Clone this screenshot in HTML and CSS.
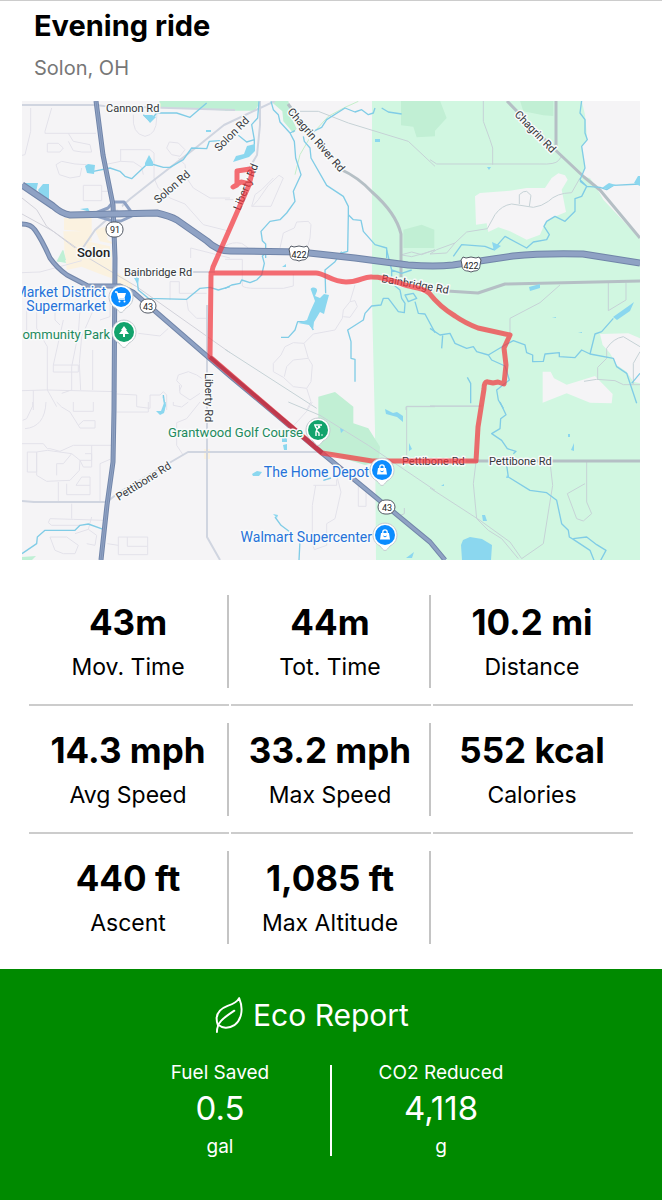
FILE: index.html
```html
<!DOCTYPE html>
<html lang="en">
<head>
<meta charset="utf-8">
<meta name="viewport" content="width=device-width, initial-scale=1">
<title>Evening ride</title>
<link rel="stylesheet" href="styles.css">
</head>
<body>
<main class="ride">
  <header class="ride-header">
    <h1 class="ride-title">Evening ride</h1>
    <p class="ride-place">Solon, OH</p>
  </header>

  <svg class="map" viewBox="22 101 618 459" role="img" aria-label="Route map around Solon, OH">
    <defs>
      <path id="pin" d="M0 15.500C-2 15.500-3 13-5 11A12 12 0 1 1 5 11C3 13 2 15.500 0 15.500z"/>
      <g id="bag"><path d="M-4-2h8l1 6.500h-10z" fill="#fff"/><path d="M-2.200-1.500v-1.500a2.200 2.200 0 0 1 4.400 0v1.500" fill="none" stroke="#fff" stroke-width="1.300"/><path d="M-1.600 1q1.600 1.800 3.200 0" fill="none" stroke="#0b8cff"/></g>
    </defs>
    <rect class="land" x="22" y="101" width="618" height="459"/>
    <path class="park" d="M372 101H640V560H376L375 430L372 300z"/>

    <g transform="translate(430 98) scale(.33333)">
      <path class="land" d="M455 8L465 50L472 125L455 145L465 210L450 235L480 240L500 270L520 305L630 422V8z"/>
      <path class="land" d="M135 295L150 285L240 278L290 270L345 270L365 240L385 226L405 232L413 245L395 275L408 342L370 358L345 375L330 410L290 425L240 400L205 388L175 402L170 376L138 380z"/>
      <path class="wood" d="M270 8H370V54L340 52L280 40zM0 8H30L50 60L0 115z"/>
    </g>
    <g transform="translate(430 250) scale(.33333)">
      <path class="land" d="M510 252L595 250L630 265V400L610 395L590 365L560 345L540 310L518 285z"/>
      <path class="land" d="M338 365H362L372 385L410 404L495 378L548 432L545 460L480 458L410 430L338 458z"/>
    </g>
    <g transform="translate(225 98) scale(.33333)">
      <path class="wood" d="M528 8H630V115L575 118L565 86L528 82zM535 395L590 380L628 395V450H535z"/>
      <path class="wood-soft" d="M0 8H108L90 38L0 38zM135 8H190L200 60L215 92L205 105L175 70L172 40z"/>
    </g>
    <g transform="translate(20 98) scale(.33333)">
      <path class="wood-soft" d="M418 8H630V38L418 28z"/>
      <path class="town" d="M132 360H185V400L132 395zM185 360H215V430H185zM225 395L262 385V425L290 440L240 430zM130 400H205V440L135 480zM200 430L270 445V480H200z"/>
      <path class="wood-soft" d="M128 455L138 495L110 490z"/>
    </g>
    <g transform="translate(20 250) scale(.33333)">
      <path class="town" d="M135 0H275V85L240 72L185 50L140 60zM275 55L335 100L340 125L275 100z"/>
      <path class="wood-soft" d="M130 0L138 30L112 36z"/>
    </g>
    <g transform="translate(225 250) scale(.33333)"><path class="wood" d="M280 440L330 426L385 470V520L430 535L465 590L462 635L420 645L290 605L270 560L280 500z"/></g>
    <path class="wood-soft" d="M22 557L36 556L32 560H22z"/>
    <path class="town" d="M204 449h6v10h-6z"/>

    <g class="minor" transform="translate(20 98) scale(.33333)">
      <path d="M32 30V100L15 170L6 172M95 30L75 100V106H228M145 106L160 130L210 140L215 162H185L160 158L145 130M82 136H115L130 150L120 162H82zM108 200L125 190L165 198L200 200M108 200L118 230L150 240L180 235L185 210M190 262H245V308H190zM245 280H268M340 50Q335 108 375 115Q410 110 410 60L412 35M300 155H390L402 165V240L415 270L450 300L495 318L550 380L630 400M440 150L448 132L475 135L495 155L480 175L455 170zM475 180L495 200L500 240L520 270L570 300H630M512 480V450L630 480M302 155V190L255 200M302 190L340 192L365 208L370 230"/>
      <path class="rail" d="M6 300L50 335L80 385L110 408L165 450M6 348L100 400L170 450"/>
    </g>
    <g class="minor" transform="translate(225 98) scale(.33333)">
      <path d="M80 325H138L175 240L162 232L130 262L100 305L82 325M80 325L90 290L110 275L145 240M0 305L25 305M165 450L175 405L208 390L215 372L250 370L258 380L255 420L248 445M0 445Q20 430 50 436L70 450"/>
      <path class="trail" d="M210 230L225 170L260 110L310 55L360 28L400 10"/>
      <path class="road-thin" d="M225 40H280L370 75L550 130L630 205M530 470L560 462L590 470L630 455"/>
    </g>
    <g class="road-thin" transform="translate(430 98) scale(.33333)">
      <path d="M160 8V70L180 125L188 150V200M0 185L20 198H330Q375 200 385 188L395 175M268 318L268 290Q280 278 290 280L303 292L298 325M0 468L50 465L75 435L110 402L172 392L195 350Q215 322 245 318L310 328Q335 325 355 310Q380 285 425 284L450 240M0 468L20 455L75 435"/>
    </g>
    <g class="minor" transform="translate(20 250) scale(.33333)">
      <path d="M6 68L60 66L185 32M50 165V235L82 290V420L110 470M105 160V210L120 225M150 160Q185 150 180 180L175 250L155 350V420L125 430M220 180L185 260L178 340L182 420M218 300V420M100 345H175V366H100zM6 422L80 420L290 425M40 420V480M130 210L100 345M20 170V260M290 432L350 435V470L390 475V435H420L430 425L440 435V480M450 150V95H478V130H560M500 150L505 180L530 205H565M355 250L420 258L445 235M478 422L485 408L470 392L475 375L505 365L530 375L545 385M540 430L510 450L480 430L478 405M240 210L270 200V160"/>
      <path class="rail" d="M190 15L350 110L630 308"/>
    </g>
    <g class="minor" transform="translate(225 250) scale(.33333)">
      <path d="M0 28H52V108Q60 115 90 115H175L205 108V72M390 105L375 155L355 180L352 205L330 240L265 252L237 280L205 278L180 290L168 315L145 340V365L175 382L205 410L245 415M237 280L250 325L262 345L258 395L245 415L258 455L245 480M250 325L205 330L185 350L178 380M375 155L390 152L397 170L375 202L355 200"/>
      <path class="road-thin" d="M0 298L275 475M530 15L560 20L590 12L630 0M543 480V470H630"/>
    </g>
    <g class="road-thin" transform="translate(430 250) scale(.33333)">
      <path d="M240 250V205L330 158L390 105M535 98V182L588 150V98M0 468H155M462 394L500 388L555 392L580 404H630M503 390V352L530 325V295Q550 265 580 260L630 290M630 305L610 340V402"/>
    </g>
    <g class="minor" transform="translate(20 402) scale(.33333)">
      <path d="M15 80Q75 75 78 0M38 0V12L20 50L8 55M110 0L125 15L150 30L180 78H225V56H190L175 70M160 0V28H220V0M290 30H385V0M460 0V10L485 15L505 0M540 0L500 50L470 62V130L490 160M6 125H70L82 140H90L120 148L160 130H275M50 150L82 145L155 155L180 175L178 205L150 235L80 238L50 220zM22 150H50V210H22zM155 155L130 185H110V220M180 175H215V130M180 175L190 195H215V155H195M115 240V298M140 245V278H210V225H185L168 250H210M240 300V185L270 172M155 305V350M90 350L160 352L250 355M90 350L85 362L95 370L185 370M90 405H140L175 430L165 455H130L105 445zM165 395L205 382L230 400L225 430L200 425M295 405H383V458H295zM322 405V433H383M262 425L295 430M205 382L215 345"/>
    </g>
    <g class="minor" transform="translate(225 402) scale(.33333)">
      <path d="M262 0L245 28L205 72M265 250H335V232M335 220L348 270L330 350L305 365V430L268 443L262 425V310L272 250M400 245V313H423V265"/>
      <path class="road-thin" d="M190 0L285 40L430 130L630 265M630 13H545V160M538 318V335L520 343"/>
    </g>
    <g class="road-thin" transform="translate(430 402) scale(.33333)">
      <path d="M0 13H148M138 180L130 245L140 350L175 385L215 410L265 470M0 258L150 355L240 420L275 470L340 425L355 330L368 250L360 180M470 178V300L485 335L460 357L440 350L412 275L465 245"/>
    </g>

    <path class="road" d="M22 105H96L104 106L235 110M275 101L224 125L198 146L154 180L130 199L95 230L80 252M260 101V125L257 155L247 172M190 272H215M22 501L34 502H107L118 493L188 452H322M207 305V537L220 560"/>
    <path class="road-gray" d="M340 169Q358 177 372 192Q396 213 401 234V277M507 101L550 145L584 177L600 190L640 238M556 101V148M447 291L478 293L505 284L640 281M430 461H640M288 104L300 120"/>

    <g class="river">
      <g transform="translate(20 98) scale(.33333)"><path d="M370 50L390 70L410 45H470L510 58L560 15M220 220L270 210L300 220L315 235L335 242L385 195L430 208H450L490 185L515 150L560 152L568 130L600 128"/></g>
      <g transform="translate(225 98) scale(.33333)"><path d="M102 10L98 60L80 80L88 125L65 132L40 112M88 125V150M138 10L145 35L160 50L165 72L195 105L208 130L212 180L228 230L205 280L210 310L185 345L165 365L135 370L108 400L112 428L122 438V480M195 105L210 98M235 115L238 130L255 150L258 180L305 262L355 295L370 325V350L368 460L350 465M370 350L385 365L408 367L415 400L450 440L485 450V480M265 100L290 88L305 65L360 30L390 42L410 35L430 50L445 45L450 30M470 30L490 42L530 48"/></g>
      <g transform="translate(430 98) scale(.33333)"><path d="M455 8L450 45L465 65V105L472 125L455 145L465 210L450 245L470 265L455 295L435 302V340L405 370L375 355L350 370L342 385L358 410L350 425L310 432L290 450L225 415L190 455L165 445L95 440L70 475M450 250L470 265L510 268L530 275L550 262L630 258"/></g>
      <g transform="translate(20 250) scale(.33333)"><path d="M350 80L355 120L385 145L500 148L540 115L570 112L595 120L630 110M430 435L435 470"/></g>
      <g transform="translate(225 250) scale(.33333)"><path d="M0 115L20 105L45 100L50 90L75 98L95 90L110 75L118 40L112 18L125 8M350 5L330 35L300 60L302 130M168 262H190L210 240L218 215L250 215L265 240M390 395V328L378 325V275L368 240L415 210L420 190L440 168L468 165L475 145L490 145L520 185L538 188L540 160L530 145L525 120L500 100V60L485 0M500 60L530 70L560 60M540 135L565 130L575 145L550 155zM570 155L580 190L600 192L630 248"/></g>
      <g transform="translate(430 250) scale(.33333)"><path d="M0 235L30 255L60 250L75 280L110 295L130 290L140 305L175 315L225 285L250 272L285 285L290 308L308 315V335L340 334L345 312L388 308V320L435 323L455 300L480 312L550 325L560 350L590 370L600 400M480 312L495 252L515 245L550 205M38 257L35 295M175 315L185 330L225 348L238 390L200 420L205 450L220 475M112 382L122 400V460M605 400L630 370M600 400L620 460"/></g>
      <g transform="translate(20 402) scale(.33333)"><path d="M435 0L430 30M6 455L50 425L52 405L75 385H165L180 370L205 366L250 382"/></g>
      <g transform="translate(225 402) scale(.33333)"><path d="M150 345L168 370L195 390M222 475L225 415M295 235L318 228"/></g>
      <g transform="translate(430 402) scale(.33333)"><path d="M210 0L228 38L212 50L210 80L185 95L215 115L232 140L258 148L250 155M230 190L235 225L300 265L350 272L380 295L395 365L415 385L418 405L430 412L480 445L492 475M430 410L470 405L500 428L528 445L512 475"/></g>
    </g>
    <g class="lake">
      <path d="M85 166L88 164L95 165L94 174L87 173zM25 183H38L36 192zM38 190L43 184H49V200L42 199zM145 163L149 155L153 162V166H145zM80 209L88 208L90 212zM144 115L150 123L156 117L152 115zM134 133L138 137zM206 130h5v2h-5z"/>
      <path d="M233 162L236 156L244 154L247 146L255 144V151L249 157zM375 139h5v3h-5zM487 167h4l-2 3z"/>
      <path d="M311 290C309 287 318 286 317 291L315 296L320 298L324 294L329 295L326 306L324 314L320 312L314 322L313 330L309 325L298 323L307 320L310 312L315 301zM282 267l4-3v3zM134 278h5l-1 7zM162 395L166 405L164 413L160 415L156 411L161 411L164 403z"/>
      <path d="M529 287L540 284V288L530 291zM613 317L630 305L634 302L630 311L617 320zM552 317h4v1zM578 332h4v1zM602 188L606 185L609 183L616 185L607 189zM634 183L638 176H640V186zM492 242L501 246L494 251z"/>
      <path d="M252 474L257 471L262 472L259 476L253 476zM282 438l5-4v8h-5zM283 445l4-1v6h-3zM340 428l4 2l-3 3zM385 409L393 413L397 412L403 416V422L397 417L386 414zM409 443l3 6l-3 2zM406 558L414 552L412 558zM273 514l5 1l-1 3zM461 545L463 540L470 537L482 539L492 545L491 560H462zM482 515h3l2 6h-4zM571 450l3-7v8zM568 434h2v3h-2zM507 475l3 3h-4zM441 486l3-2v2z"/>
    </g>

    <g class="ramp"><path d="M93 214L108 208L113 202H124L132 213M93 215L113 221H121L132 216"/></g>
    <circle class="land" cx="119" cy="207" r="3"/>
    <path class="hwy-edge" d="M96 101L103 155L113 205L115 258L114 410L113 462L107 505L101 560"/>
    <path class="hwy" d="M96 101L103 155L113 205L115 258L114 410L113 462L107 505L101 560"/>
    <path class="hwy-core" d="M96 101L103 155L113 205L115 258L114 410L113 462L107 505L101 560"/>
    <path class="hwy-edge" d="M22 224Q31 224 35 230Q42 240 50 258Q57 268 67 275L88 286H120L133 292L230 376L322 453L430 542L445 560"/>
    <path class="hwy" d="M22 224Q31 224 35 230Q42 240 50 258Q57 268 67 275L88 286H120L133 292L230 376L322 453L430 542L445 560"/>
    <path class="hwy-edge major" d="M22 185L53 206Q62 214 70 215L157 213Q170 216 177 220L207 241Q217 251 230 251L300 252L355 258L408 265Q435 267 453 265L513 256Q543 253 583 254L640 263"/>
    <path class="hwy major-core" d="M22 185L53 206Q62 214 70 215L157 213Q170 216 177 220L207 241Q217 251 230 251L300 252L355 258L408 265Q435 267 453 265L513 256Q543 253 583 254L640 263"/>

    <g class="label">
      <text x="106" y="112">Cannon Rd</text>
      <text transform="translate(158 204) rotate(-41)">Solon Rd</text>
      <text transform="translate(219 152) rotate(-45)">Solon Rd</text>
      <text transform="translate(287 112) rotate(49)">Chagrin River Rd</text>
      <text transform="translate(514 115) rotate(46)">Chagrin Rd</text>
      <text transform="translate(240 211) rotate(-68)">Liberty Rd</text>
      <text x="124" y="276">Bainbridge Rd</text>
      <text transform="translate(381 282) rotate(10)">Bainbridge Rd</text>
      <text transform="translate(205 373) rotate(90)">Liberty Rd</text>
      <text transform="translate(119 501) rotate(-32)">Pettibone Rd</text>
      <text x="402" y="465">Pettibone Rd</text>
      <text x="489" y="465">Pettibone Rd</text>
    </g>

    <path class="route" d="M213 267L249 185L252 173L250 169L237 171V185L233 187L241 182L250 184M213 267L211 275L210 357L322 453L372 461H476L478 427L484 389Q484 381 488 382L493 383L498 382L504 384L506 365L504 348L510 335L478 328Q465 323 455 316Q440 307 429 293Q424 289 413 287C400 285 390 277 372 277C364 276 360 282 346 282S324 273 316 273H211"/>
    <path class="route-overlap" d="M210 357L322 453"/>

    <text class="city" x="77" y="257">Solon</text>
    <g class="poi blue" text-anchor="end">
      <text x="106" y="297">Market District</text>
      <text x="106" y="311">Supermarket</text>
      <text x="369" y="477">The Home Depot</text>
      <text x="372" y="542">Walmart Supercenter</text>
    </g>
    <g class="poi green" text-anchor="end">
      <text x="110" y="339">ommunity Park</text>
      <text x="303" y="437">Grantwood Golf Course</text>
    </g>

    <g class="shield">
      <rect x="106" y="222" width="17" height="15" rx="7"/><text x="115" y="233">91</text>
      <rect x="140" y="299" width="16" height="14" rx="7"/><text x="148" y="310">43</text>
      <rect x="378" y="500" width="17" height="14" rx="7"/><text x="387" y="511">43</text>
      <path d="M291 246l3 1 5-1 5 1 3-1 2 3-1 5c0 5-3 6-6 6l-3 1-3-1c-4 0-6-2-6-6l-1-5z"/><text x="299" y="258">422</text>
      <path d="M463 257l3 1 5-1 5 1 3-1 2 3-1 5c0 5-3 6-6 6l-3 1-3-1c-4 0-6-2-6-6l-1-5z"/><text x="471" y="269">422</text>
    </g>

    <g transform="translate(121 297)"><use href="#pin" class="pin"/><circle class="pin-blue" r="10"/><path d="M-6-5H-4L-2 2H4" fill="none" stroke="#fff" stroke-width="1.300"/><path d="M-4-4H5L3.500 1H-2.500z" fill="#fff"/><circle cx="-1.500" cy="4.500" r="1" fill="#fff"/><circle cx="3.500" cy="4.500" r="1" fill="#fff"/></g>
    <g transform="translate(124 332)"><use href="#pin" class="pin"/><circle class="pin-green" r="10"/><path d="M0-6L3-2H2L5 2H1V5H-1V2H-5L-2-2H-3z" fill="#fff"/></g>
    <g transform="translate(318 430)"><use href="#pin" class="pin"/><circle class="pin-green" r="10"/><path d="M-4-5H4M-3-4L-1-1L-2 2V6M-1-1L2-3M-1 1L1 3V6" fill="none" stroke="#fff" stroke-width="1.400"/><circle cx="1" cy="-3" r="1.300" fill="#fff"/><circle cx="4" cy="5" r=".8" fill="#fff"/></g>
    <g transform="translate(382 470)"><use href="#pin" class="pin"/><circle class="pin-blue" r="10"/><use href="#bag"/></g>
    <g transform="translate(385 535)"><use href="#pin" class="pin"/><circle class="pin-blue" r="10"/><use href="#bag"/></g>
  </svg>

  <section class="stats" aria-label="Ride statistics">
    <div class="stat"><div class="stat-body"><strong class="stat-value">43m</strong><span class="stat-name">Mov. Time</span></div></div>
    <div class="stat"><div class="stat-body"><strong class="stat-value">44m</strong><span class="stat-name">Tot. Time</span></div></div>
    <div class="stat"><div class="stat-body"><strong class="stat-value">10.2 mi</strong><span class="stat-name">Distance</span></div></div>
    <div class="stat"><div class="stat-body"><strong class="stat-value">14.3 mph</strong><span class="stat-name">Avg Speed</span></div></div>
    <div class="stat"><div class="stat-body"><strong class="stat-value">33.2 mph</strong><span class="stat-name">Max Speed</span></div></div>
    <div class="stat"><div class="stat-body"><strong class="stat-value">552 kcal</strong><span class="stat-name">Calories</span></div></div>
    <div class="stat"><div class="stat-body"><strong class="stat-value">440 ft</strong><span class="stat-name">Ascent</span></div></div>
    <div class="stat"><div class="stat-body"><strong class="stat-value">1,085 ft</strong><span class="stat-name">Max Altitude</span></div></div>
  </section>

  <section class="eco" aria-labelledby="eco-title">
    <h2 class="eco-title" id="eco-title">
      <svg class="leaf" viewBox="0 0 30 38" aria-hidden="true"><path d="M2 36C2 26 8 22 20 14M3 29C-1 18 5 12 13 9C19 7 23 5 25 1C30 13 27 24 20 29C14 33 7 32 4 29"/></svg>
      Eco Report
    </h2>
    <div class="eco-stats">
      <div class="eco-stat"><span>Fuel Saved</span><span class="eco-value">0.5</span><span>gal</span></div>
      <div class="eco-stat"><span>CO2 Reduced</span><span class="eco-value">4,118</span><span>g</span></div>
    </div>
  </section>
</main>
</body>
</html>
```
FILE: styles.css
```css
* { box-sizing: border-box; }
body {
  margin: 0;
  background: #fff;
  color: #000;
  font-family: Inter, "Liberation Sans", sans-serif;
}
.ride {
  display: flex;
  flex-direction: column;
  min-height: 100vh;
  border-top: 1px solid #ccc;
}
.ride-header { padding: 7px 34px 21px; }
.ride-title { margin: 0; font-size: 29px; line-height: 36px; font-weight: 700; }
.ride-place { margin: 12px 0 0; font-size: 20px; line-height: 24px; color: #777; }

.map { display: block; width: auto; margin: 0 22px; font-family: Roboto, "Liberation Sans", sans-serif; }
.land { fill: #f5f4f6; }
.park { fill: #d1f7e1; }
.wood { fill: #c1efd4; }
.wood-soft { fill: #bff0d5; }
.town { fill: #fbf2e0; }
.lake { fill: #8bd7ef; }
.map path { stroke-linejoin: round; }
.river path { fill: none; stroke: #80cce6; stroke-width: 4; }
.minor path, .road-thin path, .minor .road-thin { fill: none; stroke: #e3e2ea; stroke-width: 3; }
.road-thin path, .minor .road-thin { stroke: #c6d2d6; }
.minor .rail { stroke: #d2d2da; }
.minor .trail { stroke: #c4efc9; }
.road { fill: none; stroke: #d0d5e0; stroke-width: 2; }
.road-gray { fill: none; stroke: #b5bfc5; stroke-width: 3; }
.ramp path { fill: none; stroke: #8fa2c4; stroke-width: 3; }
.hwy-edge { fill: none; stroke: #7185a9; stroke-width: 5; }
.hwy { fill: none; stroke: #8fa2c4; stroke-width: 3; }
.hwy-core { fill: none; stroke: #7f92b4; stroke-width: 1; }
.major { stroke-width: 7; }
.major-core { stroke-width: 5; }
.route { fill: none; stroke: #f2383f; stroke-width: 5; stroke-linecap: round; opacity: 0.72; }
.route-overlap { fill: none; stroke: #a82038; stroke-width: 4; opacity: 0.5; }
.map text { stroke: #f8fafa; stroke-width: 3px; stroke-linejoin: round; paint-order: stroke; }
.label text { font-size: 11px; fill: #34363b; }
.map .city { font-size: 13px; font-weight: 500; fill: #222; }
.blue text { font-size: 14px; fill: #2672d9; }
.green text { font-size: 13px; fill: #1d8a5e; }
.shield rect, .shield path { fill: #fff; stroke: #555b66; stroke-width: 1; }
.shield text { font-size: 9px; fill: #222; text-anchor: middle; stroke: none; }
.pin { fill: #fff; stroke: #c5cbd0; stroke-width: 1; }
.pin-blue { fill: #0b8cff; }
.pin-green { fill: #12a36c; }

.stats {
  display: grid;
  grid-template-columns: repeat(3, 1fr);
  column-gap: 2px;
  padding: 18px 29px 7px;
}
.stat { padding: 17px 0 16px; border-bottom: 2px solid #ccc; }
.stat:nth-child(n+7) { border-bottom-color: transparent; }
.stat-body {
  display: flex;
  flex-direction: column;
  align-items: center;
  height: 93px;
  padding-top: 5px;
  border-right: 2px solid #c4c4c4;
  white-space: nowrap;
}
.stat:nth-child(3n) .stat-body { border-right-color: transparent; }
.stat-value { font-size: 35px; line-height: 44px; font-weight: 700; }
.stat-name { margin-top: 8px; font-size: 23px; line-height: 30px; }

.eco { flex: 1; padding: 24px 0 40px; background: #008a00; color: #fff; }
.eco-title {
  display: flex;
  justify-content: center;
  align-items: center;
  gap: 9px;
  margin: 0;
  padding-right: 38px;
  font-size: 30px;
  line-height: 44px;
  font-weight: 400;
}
.leaf { width: 29px; height: 37px; fill: none; stroke: #fff; stroke-width: 2; stroke-linecap: round; stroke-linejoin: round; }
.eco-stats { display: flex; justify-content: center; margin-top: 28px; padding-right: 2px; }
.eco-stat {
  display: flex;
  flex-direction: column;
  align-items: center;
  width: 220px;
  height: 91px;
  font-size: 19px;
  line-height: 16px;
}
.eco-stat + .eco-stat { border-left: 2px solid #fff; }
.eco-value { margin: 7px 0 11px; font-size: 33px; line-height: 40px; }
```
